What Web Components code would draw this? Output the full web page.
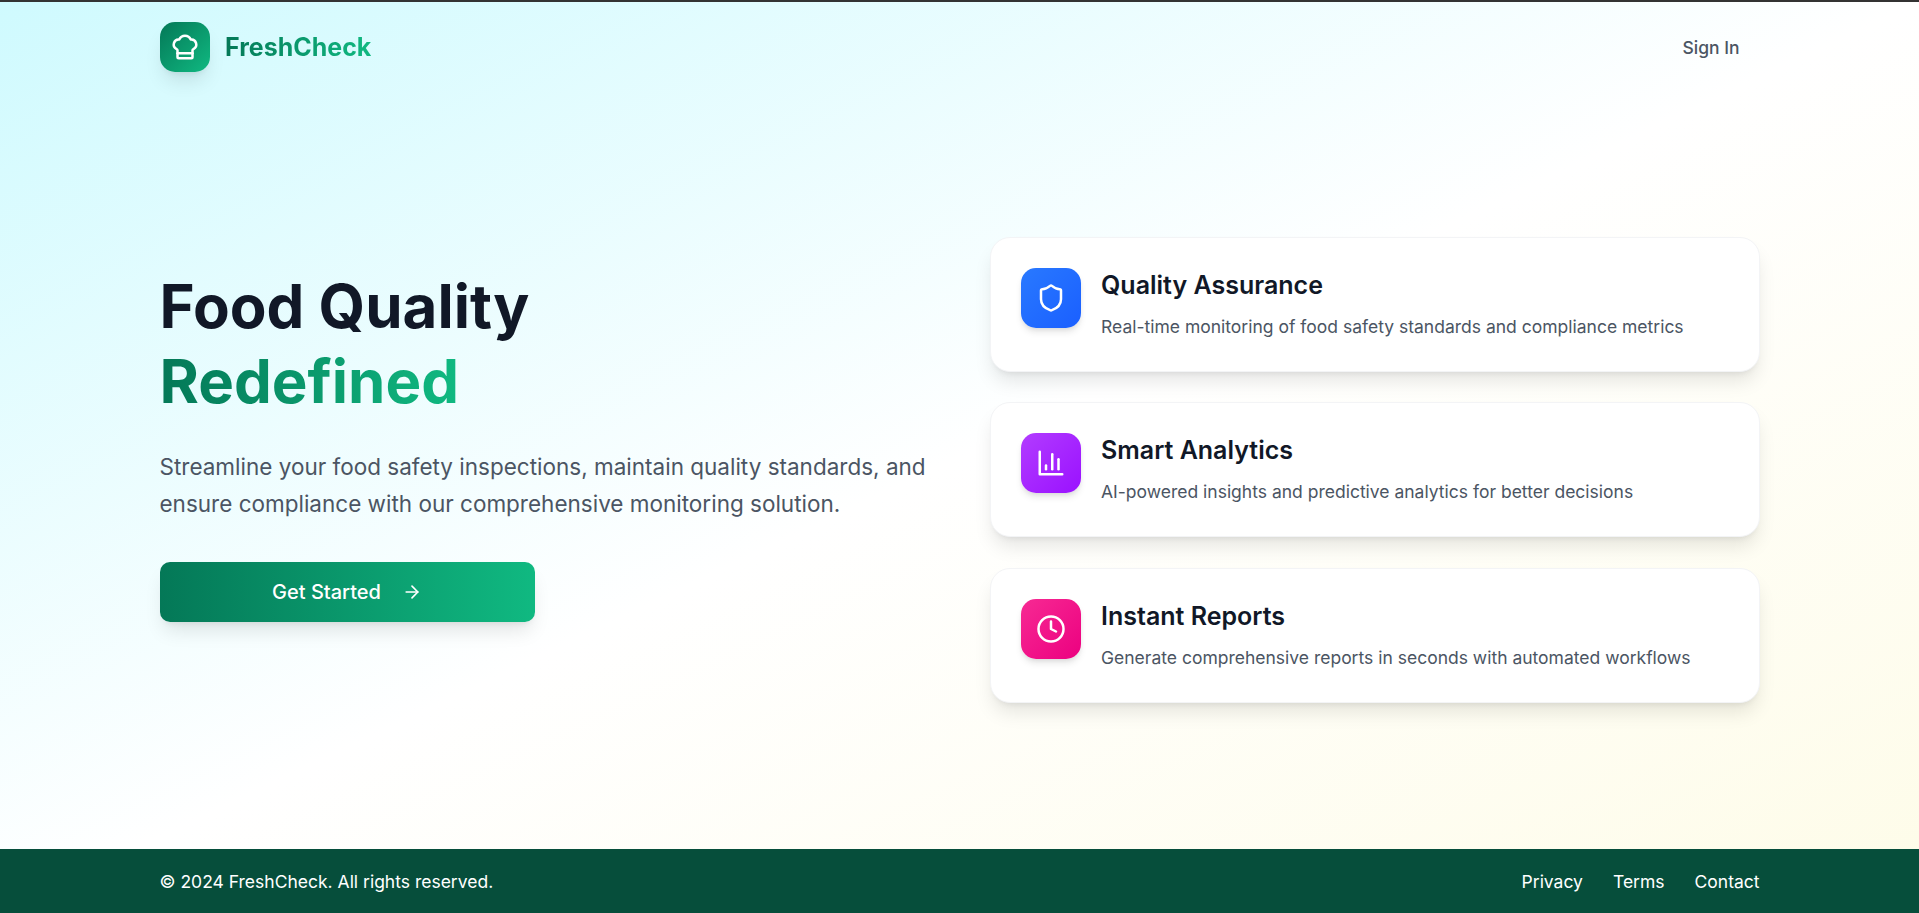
<!DOCTYPE html>
<html lang="en"><head><meta charset="utf-8"><title>FreshCheck</title>
<style>
html,body{margin:0;height:100%}
body{font-family:Inter,"Liberation Sans",sans-serif}
</style></head><body>
<fresh-app>
  <fresh-header></fresh-header>
  <fresh-hero slot="left"></fresh-hero>
  <feature-card slot="right" tone="blue" icon="shield" heading="Quality Assurance" text="Real-time monitoring of food safety standards and compliance metrics"></feature-card>
  <feature-card slot="right" tone="purple" icon="chart" heading="Smart Analytics" text="AI-powered insights and predictive analytics for better decisions"></feature-card>
  <feature-card slot="right" tone="pink" icon="clock" heading="Instant Reports" text="Generate comprehensive reports in seconds with automated workflows"></feature-card>
  <fresh-footer slot="footer"></fresh-footer>
</fresh-app>
<script>
const def=(name,html)=>customElements.define(name,class extends HTMLElement{
  connectedCallback(){ if(this.shadowRoot)return; const r=this.attachShadow({mode:'open'}); r.innerHTML=typeof html==='function'?html(this):html; }
});
const sh1='0 12.5px 18.75px -3.75px rgba(0,0,0,.1),0 5px 7.5px -5px rgba(0,0,0,.1)';
const sh2='0 5px 7.5px -1.25px rgba(0,0,0,.1),0 2.5px 5px -2.5px rgba(0,0,0,.1)';
def('fresh-app',`<style>
:host{display:flex;flex-direction:column;box-sizing:border-box;height:100vh;border-top:2px solid #333;background:linear-gradient(to bottom right,#cffafe 0%,#fff 50%,#fefce8 100%)}
.top{flex:none}
main{flex:1;display:grid;grid-template-columns:770px 770px;column-gap:60px;justify-content:center;align-items:center}
.cards{display:flex;flex-direction:column;gap:30.5px;padding-bottom:2px}
</style><div class="top"><slot></slot></div>
<main><div><slot name="left"></slot></div><div class="cards"><slot name="right"></slot></div></main>
<slot name="footer"></slot>`);
def('fresh-header',`<style>
:host{display:flex;justify-content:space-between;align-items:center;width:1600px;margin:0 auto;padding:20px 0}
.brand{display:flex;align-items:center;gap:15.5px}
.logo{width:50px;height:50px;border-radius:15px;background:linear-gradient(135deg,#047857,#10b981);box-shadow:${sh1};display:flex;align-items:center;justify-content:center}
.name{font-size:25px;font-weight:700;line-height:35px;background:linear-gradient(90deg,#047857,#10b981);-webkit-background-clip:text;background-clip:text;color:transparent}
.sign{font-size:17.5px;font-weight:500;color:#4b5563;padding:0 20px}
</style><div class="brand"><div class="logo"><svg width="30" height="30" viewBox="0 0 24 24" fill="none" stroke="#fff" stroke-width="2" stroke-linecap="round" stroke-linejoin="round"><path d="M17 21a1 1 0 0 0 1-1v-5.35c0-.457.316-.844.727-1.041a4 4 0 0 0-2.134-7.589 5 5 0 0 0-9.186 0 4 4 0 0 0-2.134 7.588c.411.198.727.585.727 1.041V20a1 1 0 0 0 1 1Z"/><path d="M6 17h12"/></svg></div><span class="name">FreshCheck</span></div><span class="sign">Sign In</span>`);
def('fresh-hero',`<style>
:host{display:block;padding-bottom:50px}
h1{margin:0;font-size:60px;line-height:75px;font-weight:700;color:#111827}
h1 span{display:block;width:max-content;background:linear-gradient(90deg,#047857,#10b981);-webkit-background-clip:text;background-clip:text;color:transparent}
p{margin:30px 0 40px;font-size:22.5px;line-height:36.56px;color:#4b5563}
.btn{box-sizing:border-box;width:375px;height:60px;border-radius:10px;display:flex;align-items:center;justify-content:center;gap:21px;color:#fff;font-size:20px;font-weight:500;background:linear-gradient(90deg,#047857,#10b981);box-shadow:${sh1}}
</style><h1>Food Quality<span>Redefined</span></h1>
<p>Streamline your food safety inspections, maintain quality standards, and ensure compliance with our comprehensive monitoring solution.</p>
<div class="btn">Get Started<svg width="20" height="20" viewBox="0 0 24 24" fill="none" stroke="#fff" stroke-width="2" stroke-linecap="round" stroke-linejoin="round"><path d="M5 12h14"/><path d="m12 5 7 7-7 7"/></svg></div>`);
const icons={
shield:'<path d="M20 13c0 5-3.5 7.5-7.66 8.95a1 1 0 0 1-.67-.01C7.5 20.5 4 18 4 13V6a1 1 0 0 1 1-1c2 0 4.5-1.2 6.24-2.72a1.17 1.17 0 0 1 1.52 0C14.51 3.81 17 5 19 5a1 1 0 0 1 1 1z"/>',
chart:'<path d="M3 3v18h18"/><path d="M18 17V9"/><path d="M13 17V5"/><path d="M8 17v-3"/>',
clock:'<circle cx="12" cy="12" r="10"/><path d="M12 6v6l4 2"/>'};
const tones={blue:'#2979ff,#1a5fff',purple:'#b23cff,#9a11ff',pink:'#f72a93,#ec0080'};
def('feature-card',e=>`<style>
:host{display:flex;box-sizing:border-box;padding:30px;gap:20.5px;background:#fff;border:1px solid #f3f4f6;border-radius:20px;box-shadow:${sh1}}
.i{flex:none;width:60px;height:60px;border-radius:15px;display:flex;align-items:center;justify-content:center;background:linear-gradient(135deg,${tones[e.getAttribute('tone')]});box-shadow:${sh2}}
h3{margin:0 0 10px;font-size:25px;line-height:35px;font-weight:600;color:#111827}
p{margin:0;font-size:17.5px;line-height:28px;color:#4b5563}
</style><div class="i"><svg width="30" height="30" viewBox="0 0 24 24" fill="none" stroke="#fff" stroke-width="2" stroke-linecap="round" stroke-linejoin="round">${icons[e.getAttribute('icon')]}</svg></div><div><h3>${e.getAttribute('heading')}</h3><p>${e.getAttribute('text')}</p></div>`);
def('fresh-footer',`<style>
:host{display:block;background:#064e3b;color:#fff;font-size:17.5px}
.w{width:1600px;height:64px;margin:0 auto;display:flex;justify-content:space-between;align-items:center}
nav{display:flex;gap:30px}
</style><div class="w"><span>© 2024 FreshCheck. All rights reserved.</span><nav><span>Privacy</span><span>Terms</span><span>Contact</span></nav></div>`);
</script>
</body></html>
